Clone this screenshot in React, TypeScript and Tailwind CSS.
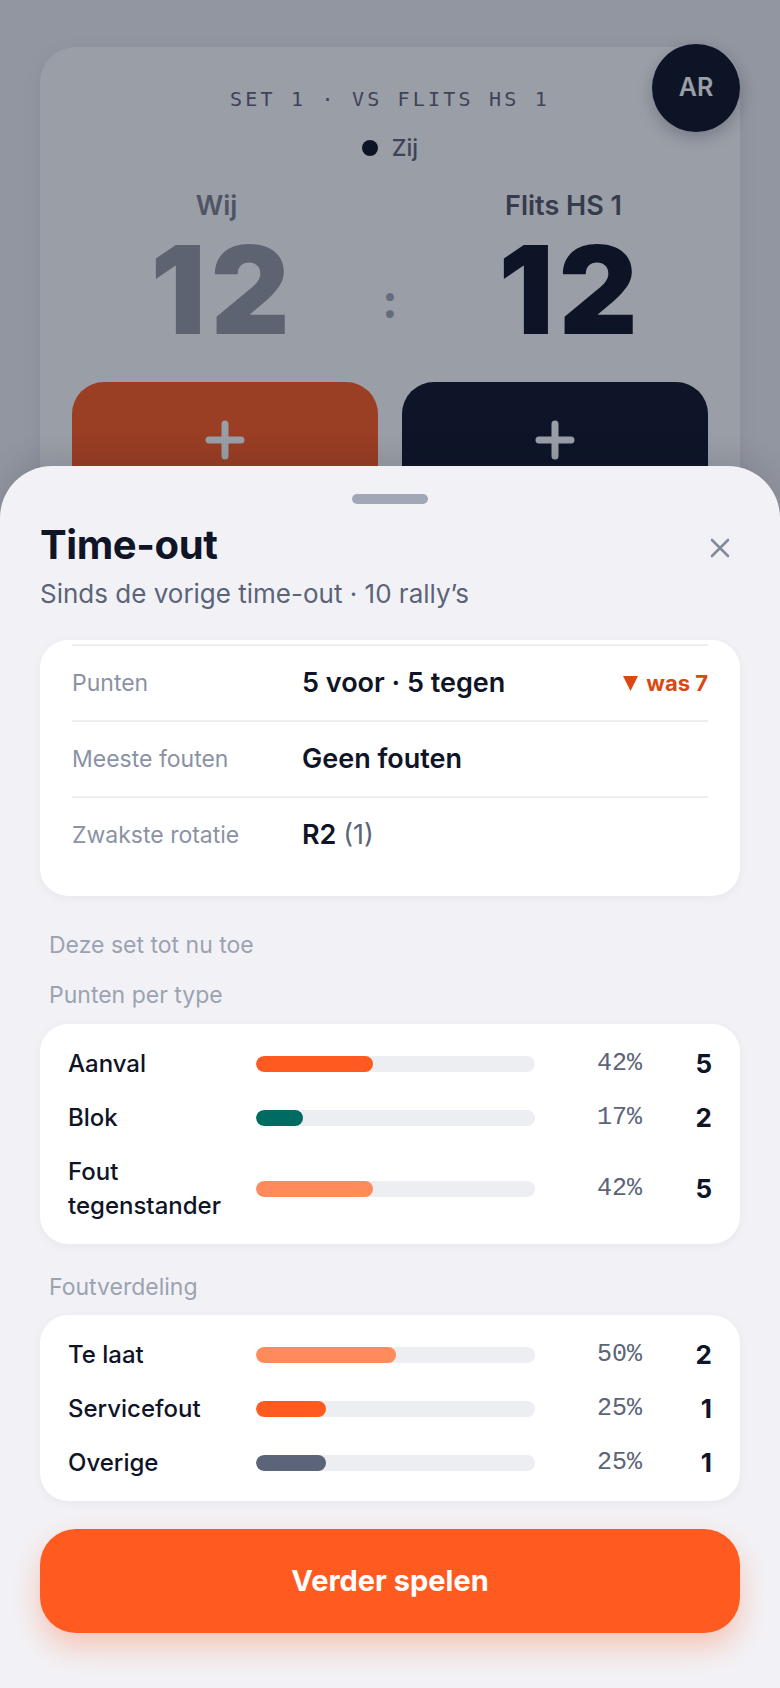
import React from "react";

type Bar = { label: string; pct: number; count: number; fill: string };

const perType: Bar[] = [
  { label: "Aanval", pct: 42, count: 5, fill: "bg-[#ff5a1f]" },
  { label: "Blok", pct: 17, count: 2, fill: "bg-[#006b60]" },
  { label: "Fout tegenstander", pct: 42, count: 5, fill: "bg-[#ff8a5b]" },
];

const faults: Bar[] = [
  { label: "Te laat", pct: 50, count: 2, fill: "bg-[#ff8a5b]" },
  { label: "Servicefout", pct: 25, count: 1, fill: "bg-[#ff5a1f]" },
  { label: "Overige", pct: 25, count: 1, fill: "bg-[#5b6478]" },
];

function PlusIcon() {
  return (
    <svg width="40" height="40" viewBox="0 0 40 40" fill="none">
      <path d="M20 4v32M4 20h32" stroke="white" strokeWidth="7" strokeLinecap="round" />
    </svg>
  );
}

function BarRow({ row }: { row: Bar }) {
  return (
    <div className="flex items-center">
      <div className="mr-[16px] w-[172px] text-[24px] font-medium leading-[34px] text-[#0f1427]">{row.label}</div>
      <div className="h-[16px] w-[279px] overflow-hidden rounded-full bg-[#edeef2]">
        <div className={`h-full rounded-full ${row.fill}`} style={{ width: `${row.pct}%` }} />
      </div>
      <div className="w-[107px] text-right font-[family-name:'Liberation_Mono',monospace] text-[25px] leading-[34px] text-[#5b6478]">
        {row.pct}%
      </div>
      <div className="w-[70px] text-right text-[26px] font-bold leading-[34px] text-[#0f1427]">{row.count}</div>
    </div>
  );
}

function StatRow({ label, children, extra }: { label: string; children: React.ReactNode; extra?: React.ReactNode }) {
  return (
    <div className="flex h-[76px] items-center border-t-2 border-[#eeeef2]">
      <div className="w-[230px] text-[23px] leading-[30px] text-[#8a92a4]">{label}</div>
      <div className="flex-1 text-[27px] font-semibold leading-[34px] text-[#0f1427]">{children}</div>
      {extra}
    </div>
  );
}

export default function App() {
  return (
    <div className="relative h-[1688px] w-full overflow-hidden bg-[#f1f1f5] font-[family-name:Inter,'Noto_Sans',sans-serif]">
      {/* Scoreboard underneath */}
      <div className="px-[40px] pt-[47px]">
        <div className="rounded-[36px] bg-white px-[32px] pt-[38px] pb-[40px] shadow-[0_4px_20px_rgba(15,23,42,0.06)]">
          <div className="text-center font-[family-name:'DejaVu_Sans_Mono',monospace] text-[20px] leading-[28px] tracking-[3.2px] text-[#606579]">
            SET 1 · VS FLITS HS 1
          </div>
          <div className="mt-[20px] flex h-[30px] items-center justify-center gap-[14px]">
            <span className="h-[16px] w-[16px] rounded-full bg-[#0d1223]" />
            <span className="text-[23px] font-medium leading-[30px] text-[#606579]">Zij</span>
          </div>
          <div className="mt-[26px] grid grid-cols-[1fr_58px_1fr] items-end">
            <div className="flex flex-col items-center">
              <div className="text-[27px] font-semibold leading-[34px] text-[#7f828e]">Wij</div>
              <div className="mt-[8px] pl-[12px] text-[122px] font-black leading-[118px] tracking-[0.04em] text-[#989aa6]">12</div>
            </div>
            <div className="mb-[25px] text-center text-[46px] font-bold leading-[46px] text-[#a3a7b5]">:</div>
            <div className="flex flex-col items-center">
              <div className="text-[27px] font-semibold leading-[34px] text-[#545768]">Flits HS 1</div>
              <div className="mt-[8px] pl-[14px] text-[122px] font-black leading-[118px] tracking-[0.04em] text-[#0d1223]">12</div>
            </div>
          </div>
          <div className="mt-[33px] grid grid-cols-2 gap-[24px]">
            <div className="flex h-[150px] justify-center rounded-[32px] bg-[#ff5a1f] pt-[38px]">
              <PlusIcon />
            </div>
            <div className="flex h-[150px] justify-center rounded-[32px] bg-[#0f1427] pt-[38px]">
              <PlusIcon />
            </div>
          </div>
        </div>
      </div>

      {/* Avatar */}
      <div className="absolute top-[44px] right-[40px] flex h-[88px] w-[88px] items-center justify-center rounded-full bg-[#0d1223] text-[25px] font-semibold text-white shadow-[0_6px_16px_rgba(15,23,42,0.25)]">
        AR
      </div>

      {/* Dim overlay */}
      <div className="absolute inset-0 bg-[rgba(15,23,42,0.42)]" />

      {/* Bottom sheet */}
      <div className="absolute inset-x-0 top-[466px] bottom-0 rounded-t-[52px] bg-[#f2f2f6] px-[40px] pt-[28px] shadow-[0_-8px_30px_rgba(15,23,42,0.12)]">
        <div className="mx-auto h-[10px] w-[76px] rounded-full bg-[#a0a8b8]" />

        <div className="mt-[17px] flex items-center justify-between">
          <h1 className="text-[40px] font-bold leading-[48px] tracking-[-0.01em] text-[#0f1427]">Time-out</h1>
          <div className="mt-[6px] flex h-[40px] w-[40px] items-center justify-center">
            <svg width="20" height="20" viewBox="0 0 20 20" fill="none">
              <path d="M2 2l16 16M18 2L2 18" stroke="#828a9b" strokeWidth="2.6" strokeLinecap="round" />
            </svg>
          </div>
        </div>
        <div className="mt-[8px] text-[26px] leading-[34px] text-[#5b6478]">Sinds de vorige time-out · 10 rally’s</div>

        <div className="mt-[29px] rounded-[28px] bg-white px-[32px] pt-[4px] pb-[24px] shadow-[0_2px_10px_rgba(15,23,42,0.05)]">
          <StatRow
            label="Punten"
            extra={
              <div className="flex items-center gap-[8px] text-[22px] font-bold leading-[30px] text-[#dc4814]">
                <svg width="15" height="15" viewBox="0 0 15 15">
                  <polygon points="0,0 15,0 7.5,15" fill="#dc4814" />
                </svg>
                was 7
              </div>
            }
          >
            5 voor · 5 tegen
          </StatRow>
          <StatRow label="Meeste fouten">Geen fouten</StatRow>
          <StatRow label="Zwakste rotatie">
            R2 <span className="font-normal text-[#5b6478]">(1)</span>
          </StatRow>
        </div>

        <div className="mt-[34px] ml-[9px] text-[23px] leading-[30px] text-[#9ba2b2]">Deze set tot nu toe</div>
        <div className="mt-[20px] ml-[9px] text-[23px] leading-[30px] text-[#9ba2b2]">Punten per type</div>

        <div className="mt-[14px] flex flex-col gap-[20px] rounded-[28px] bg-white px-[28px] pt-[23px] pb-[21px] shadow-[0_2px_10px_rgba(15,23,42,0.05)]">
          {perType.map((r) => (
            <BarRow key={r.label} row={r} />
          ))}
        </div>

        <div className="mt-[28px] ml-[9px] text-[23px] leading-[30px] text-[#9ba2b2]">Foutverdeling</div>

        <div className="mt-[13px] flex flex-col gap-[20px] rounded-[28px] bg-white px-[28px] pt-[23px] pb-[21px] shadow-[0_2px_10px_rgba(15,23,42,0.05)]">
          {faults.map((r) => (
            <BarRow key={r.label} row={r} />
          ))}
        </div>

        <button className="mt-[28px] flex h-[104px] w-full items-center justify-center rounded-[36px] bg-[#ff5a1f] text-[29px] font-bold text-white shadow-[0_14px_30px_rgba(255,90,31,0.3)]">
          Verder spelen
        </button>
      </div>
    </div>
  );
}
